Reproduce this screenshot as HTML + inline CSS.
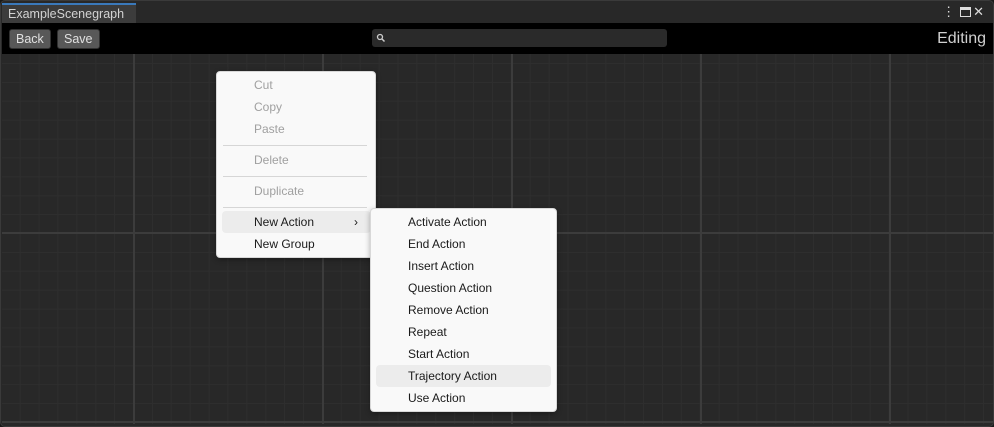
<!DOCTYPE html>
<html><head><style>
*{margin:0;padding:0;box-sizing:border-box}
body{width:994px;height:427px;background:#191919;font-family:"Liberation Sans",sans-serif;position:relative;overflow:hidden}
.win{position:absolute;left:0;top:0;width:994px;height:427px;background:#282828;border:1px solid #3a3a3a;border-radius:5px;overflow:hidden}
.tab{position:absolute;left:1px;top:2px;width:134px;height:20px;background:#3c3c3c;border-top:2px solid #3a79bb;color:#d2d2d2;font-size:12.5px;padding:2px 0 0 6px}
.tb{position:absolute;left:1px;top:22px;width:992px;height:31px;background:#000}
.btn{position:absolute;top:6px;height:20px;background:#585858;border:1px solid #303030;border-radius:3px;color:#e0e0e0;font-size:12.5px;padding:2px 6px}
.search{position:absolute;left:370px;top:6px;width:295px;height:18px;background:#2a2a2a;border-radius:3px}
.canvas{position:absolute;left:1px;top:53px;width:992px;height:370px;
background-color:#282828;
background-image:linear-gradient(90deg,#3c3c3c 2px,transparent 2px),linear-gradient(0deg,#3c3c3c 2px,transparent 2px),linear-gradient(90deg,#2e2e2e 1px,transparent 1px),linear-gradient(0deg,#2e2e2e 1px,transparent 1px);
background-size:189px 189px,189px 189px,18.9px 18.9px,18.9px 18.9px;
background-position:131px 0,0 180px,131px 0,0 180px}
.menu{position:absolute;background:#f9f9f9;border:1px solid #d8d8d8;border-radius:4px;font-size:12px;color:#1a1a1a;box-shadow:0 2px 6px rgba(0,0,0,.3)}
.it{position:absolute;left:0;height:22px;line-height:22px;width:100%}
.dis{color:#a0a0a0}
.sep{position:absolute;height:1px;background:#d6d6d6}
.hl{position:absolute;background:#ececec;border-radius:4px}
</style></head><body>
<div class="win">
<div class="tab">ExampleScenegraph</div>
<div style="position:absolute;right:6px;top:3px;color:#ddd;font-size:13px;letter-spacing:3px">⋮<span style="display:inline-block;width:11px;height:10px;border:1.5px solid #ddd;border-top-width:3px;vertical-align:-1px;margin:0 2px"></span>✕</div>
<div class="tb">
<div class="btn" style="left:7px">Back</div>
<div class="btn" style="left:55px">Save</div>
<div class="search"><svg width="10" height="10" style="position:absolute;left:4px;top:4px"><circle cx="4" cy="4" r="2.5" stroke="#ccc" fill="none" stroke-width="1.3"/><line x1="6" y1="6" x2="8.5" y2="8.5" stroke="#ccc" stroke-width="1.5"/></svg></div>
<div style="position:absolute;right:8px;top:7px;color:#d0d0d0;font-size:16px">Editing</div>
</div>
<div class="canvas"></div>
</div>
<div class="menu" style="left:216px;top:71px;width:160px;height:187px">
<div class="hl" style="left:5px;top:139px;width:149px;height:22px"></div>
<div class="it dis" style="top:2px;padding-left:37px">Cut</div>
<div class="it dis" style="top:24px;padding-left:37px">Copy</div>
<div class="it dis" style="top:46px;padding-left:37px">Paste</div>
<div class="sep" style="left:6px;width:144px;top:73px"></div>
<div class="it dis" style="top:77px;padding-left:37px">Delete</div>
<div class="sep" style="left:6px;width:144px;top:104px"></div>
<div class="it dis" style="top:108px;padding-left:37px">Duplicate</div>
<div class="sep" style="left:6px;width:144px;top:135px"></div>
<div class="it" style="top:139px;padding-left:37px">New Action<span style="position:absolute;left:137px">›</span></div>
<div class="it" style="top:161px;padding-left:37px">New Group</div>
</div>
<div class="menu" style="left:370px;top:208px;width:187px;height:204px">
<div class="hl" style="left:5px;top:156px;width:175px;height:22px"></div>
<div class="it" style="top:2px;padding-left:37px">Activate Action</div>
<div class="it" style="top:24px;padding-left:37px">End Action</div>
<div class="it" style="top:46px;padding-left:37px">Insert Action</div>
<div class="it" style="top:68px;padding-left:37px">Question Action</div>
<div class="it" style="top:90px;padding-left:37px">Remove Action</div>
<div class="it" style="top:112px;padding-left:37px">Repeat</div>
<div class="it" style="top:134px;padding-left:37px">Start Action</div>
<div class="it" style="top:156px;padding-left:37px">Trajectory Action</div>
<div class="it" style="top:178px;padding-left:37px">Use Action</div>
</div>
</body></html>
